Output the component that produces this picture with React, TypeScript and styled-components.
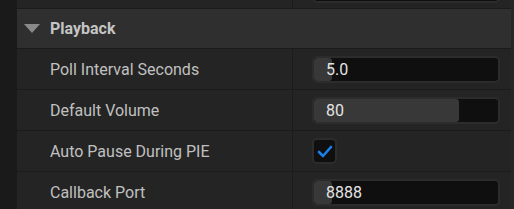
import React from 'react';
import styled, { createGlobalStyle } from 'styled-components';

const GlobalStyle = createGlobalStyle`
    html, body {
        margin: 0;
        padding: 0;
        background: #1a1a1a;
        font-family: Roboto, "Noto Sans", sans-serif;
        -webkit-font-smoothing: antialiased;
    }
`;

type Field =
    | { label: string; kind: 'number'; value: string; fill: number }
    | { label: string; kind: 'check'; checked: boolean };

const fields: Field[] = [
    { label: 'Poll Interval Seconds', kind: 'number', value: '5.0', fill: 0 },
    { label: 'Default Volume', kind: 'number', value: '80', fill: 0.79 },
    { label: 'Auto Pause During PIE', kind: 'check', checked: true },
    { label: 'Callback Port', kind: 'number', value: '8888', fill: 0 },
];

export default function App() {
    return (
        <>
            <GlobalStyle />
            <StyledPage>
                <StyledGutter />
                <StyledPanel>
                    <StyledRow $height={8}>
                        <StyledNameCell />
                        <StyledValueCell>
                            <StyledClippedBox />
                        </StyledValueCell>
                    </StyledRow>
                    <StyledHeader>
                        <StyledArrow />
                        <StyledHeaderText>Playback</StyledHeaderText>
                    </StyledHeader>
                    {fields.map((field) => (
                        <StyledRow key={field.label} $height={40}>
                            <StyledNameCell>
                                <StyledLabel>{field.label}</StyledLabel>
                            </StyledNameCell>
                            <StyledValueCell>
                                {field.kind === 'number' ? (
                                    <StyledNumberBox>
                                        <StyledFill style={{ width: field.fill > 0 ? `${field.fill * 100}%` : undefined }} />
                                        <StyledValue>{field.value}</StyledValue>
                                    </StyledNumberBox>
                                ) : (
                                    <StyledCheckbox>
                                        {field.checked && (
                                            <svg width="16" height="13" viewBox="0 0 16 13">
                                                <path
                                                    d="M2 7 L6 11 L14 2"
                                                    fill="none"
                                                    stroke="#1b80e8"
                                                    strokeWidth="2.6"
                                                    strokeLinecap="round"
                                                    strokeLinejoin="round"
                                                />
                                            </svg>
                                        )}
                                    </StyledCheckbox>
                                )}
                            </StyledValueCell>
                        </StyledRow>
                    ))}
                </StyledPanel>
                <StyledEdge />
            </StyledPage>
        </>
    );
}

const StyledPage = styled.div`
    display: flex;
    width: 514px;
    height: 209px;
    overflow: hidden;
    background: #1a1a1a;
`;

const StyledGutter = styled.div`
    width: 17px;
    flex-shrink: 0;
    background: #1a1a1a;
`;

const StyledEdge = styled.div`
    width: 3px;
    flex-shrink: 0;
    background: #262626;
`;

const StyledPanel = styled.div`
    flex: 1;
    display: flex;
    flex-direction: column;
`;

const StyledRow = styled.div<{ $height: number }>`
    display: flex;
    height: ${(p) => p.$height}px;
    flex-shrink: 0;
    background: #242424;
    border-bottom: 1px solid #1b1b1b;
`;

const StyledNameCell = styled.div`
    width: 276px;
    flex-shrink: 0;
    display: flex;
    align-items: center;
    padding-left: 33px;
    box-sizing: border-box;
    border-right: 1px solid #1c1c1c;
`;

const StyledValueCell = styled.div`
    flex: 1;
    display: flex;
    align-items: center;
    padding-left: 19px;
    padding-right: 11px;
`;

const StyledLabel = styled.span`
    font-size: 16px;
    color: #c0c0c0;
`;

const StyledHeader = styled.div`
    display: flex;
    align-items: center;
    height: 39px;
    flex-shrink: 0;
    background: #2f2f2f;
    border-bottom: 1px solid #1b1b1b;
    padding-left: 7px;
`;

const StyledArrow = styled.div`
    width: 0;
    height: 0;
    border-left: 8px solid transparent;
    border-right: 8px solid transparent;
    border-top: 9px solid #8a8a8a;
    margin-right: 10px;
`;

const StyledHeaderText = styled.span`
    font-size: 16px;
    font-weight: 700;
    color: #c4c4c4;
`;

const StyledNumberBox = styled.div`
    position: relative;
    flex: 1;
    height: 27px;
    box-sizing: border-box;
    border: 2px solid #2c2c2c;
    border-radius: 5px;
    background: #0f0f0f;
    display: flex;
    align-items: center;
    overflow: hidden;
`;

const StyledClippedBox = styled(StyledNumberBox)`
    align-self: flex-start;
    margin-top: -24px;
`;

const StyledFill = styled.div`
    position: absolute;
    left: 0;
    top: 0;
    bottom: 0;
    width: 18px;
    background: #383838;
    border-radius: 3px;
`;

const StyledValue = styled.span`
    position: relative;
    padding-left: 12px;
    font-size: 16px;
    color: #e4e4e4;
`;

const StyledCheckbox = styled.div`
    width: 25px;
    height: 26px;
    box-sizing: border-box;
    border: 2px solid #2c2c2c;
    border-radius: 5px;
    background: #0f0f0f;
    display: flex;
    align-items: center;
    justify-content: center;
`;
